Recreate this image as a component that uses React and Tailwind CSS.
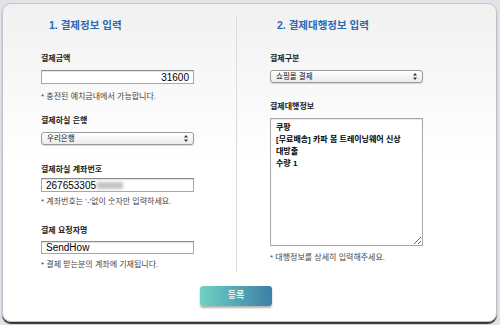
import React from "react";

const font = "[font-family:'Liberation_Sans','Noto_Sans_CJK_KR',sans-serif]";

function Label({ children, className = "" }) {
  return (
    <div className={`text-[8px] leading-[10px] font-bold text-[#1a1a1a] ${className}`}>
      {children}
    </div>
  );
}

function Help({ children, className = "" }) {
  return (
    <div className={`text-[8px] leading-[10px] text-[#444] ${className}`}>
      {children}
    </div>
  );
}

function Select({ value, className = "" }) {
  return (
    <div
      className={`w-[153px] h-[13px] flex items-center justify-between pl-[5px] pr-[5px] rounded-[3px] border border-[#9a9a9a] bg-gradient-to-b from-white to-[#ebebeb] shadow-[0_1px_1px_rgba(0,0,0,0.15)] ${className}`}
    >
      <span className="text-[7.5px] leading-[10px] text-[#111]">{value}</span>
      <svg width="4" height="7" viewBox="0 0 4 7">
        <path d="M0 2.5 L2 0 L4 2.5 Z" fill="#333" />
        <path d="M0 4.5 L2 7 L4 4.5 Z" fill="#333" />
      </svg>
    </div>
  );
}

function Input({ children, right, className = "" }) {
  return (
    <div
      className={`w-[153px] flex items-center border border-[#a8a8a8] border-t-[#8c8c8c] bg-white shadow-[inset_0_1px_1px_rgba(0,0,0,0.12)] text-[10px] text-black ${right ? "justify-end pr-[4px]" : "pl-[4px]"} ${className}`}
    >
      {children}
    </div>
  );
}

export default function App() {
  return (
    <div className={`w-[500px] h-[325px] bg-[#e2e2e9] pl-[2px] pt-[3px] pr-[3px] ${font}`}>
      <div className="h-[319px] rounded-[9px] border border-[#c4c4cc] bg-gradient-to-b from-[#f1f1f1] via-white to-white shadow-[0_2px_1px_rgba(30,30,30,0.9)] flex flex-col">
        <div className="flex mt-[12px] h-[256px]">
          {/* left column */}
          <div className="w-[233px] pl-[38px] flex flex-col">
            <div className="ml-[8px] mt-[2px] text-[10.5px] leading-[14px] font-bold text-[#2a69b3]">
              1. 결제정보 입력
            </div>
            <Label className="mt-[22px]">결제금액</Label>
            <Input right className="mt-[6px] h-[14px]">31600</Input>
            <Help className="mt-[8px]">* 충전된 예치금내에서 가능합니다.</Help>
            <Label className="mt-[14px]">결제하실 은행</Label>
            <Select value="우리은행" className="mt-[6px]" />
            <Label className="mt-[20px]">결제하실 계좌번호</Label>
            <Input className="mt-[3px] h-[14px]">
              267653305
              <span className="inline-block ml-[1px] w-[26px] h-[7px] bg-[#c4c4c4] blur-[1.5px]" />
            </Input>
            <Help className="mt-[5px]">* 계좌번호는 '-'없이 숫자만 입력하세요.</Help>
            <Label className="mt-[19px]">결제 요청자명</Label>
            <Input className="mt-[5px] h-[13px]">SendHow</Input>
            <Help className="mt-[6px]">* 결제 받는분의 계좌에 기재됩니다.</Help>
          </div>

          <div className="w-px bg-[#dcdcdc]" />

          {/* right column */}
          <div className="flex-1 pl-[33px] flex flex-col">
            <div className="ml-[7px] mt-[2px] text-[10.5px] leading-[14px] font-bold text-[#2a69b3]">
              2. 결제대행정보 입력
            </div>
            <Label className="mt-[22px]">결제구분</Label>
            <Select value="쇼핑몰 결제" className="mt-[6px]" />
            <Label className="mt-[19px]">결제대행정보</Label>
            <textarea
              readOnly
              defaultValue={"쿠팡\n[무료배송] 카파 봄 트레이닝웨어 신상\n대방출\n수량 1"}
              className="mt-[6px] w-[153px] h-[128px] border border-[#a8a8a8] bg-white px-[5px] py-[3px] text-[8px] leading-[12px] font-bold text-black outline-none shadow-[inset_0_1px_1px_rgba(0,0,0,0.1)]"
            />
            <Help className="mt-[7px]">* 대행정보를 상세히 입력해주세요.</Help>
          </div>
        </div>

        <div className="flex pl-[197px] mt-[14px]">
          <button className="w-[72px] h-[20px] rounded-[3px] bg-gradient-to-r from-[#6fd3c3] to-[#3d80a5] shadow-[0_2px_2px_rgba(0,0,0,0.3)] text-[9px] font-bold text-[#e6f6f2]">
            등록
          </button>
        </div>
      </div>
    </div>
  );
}
